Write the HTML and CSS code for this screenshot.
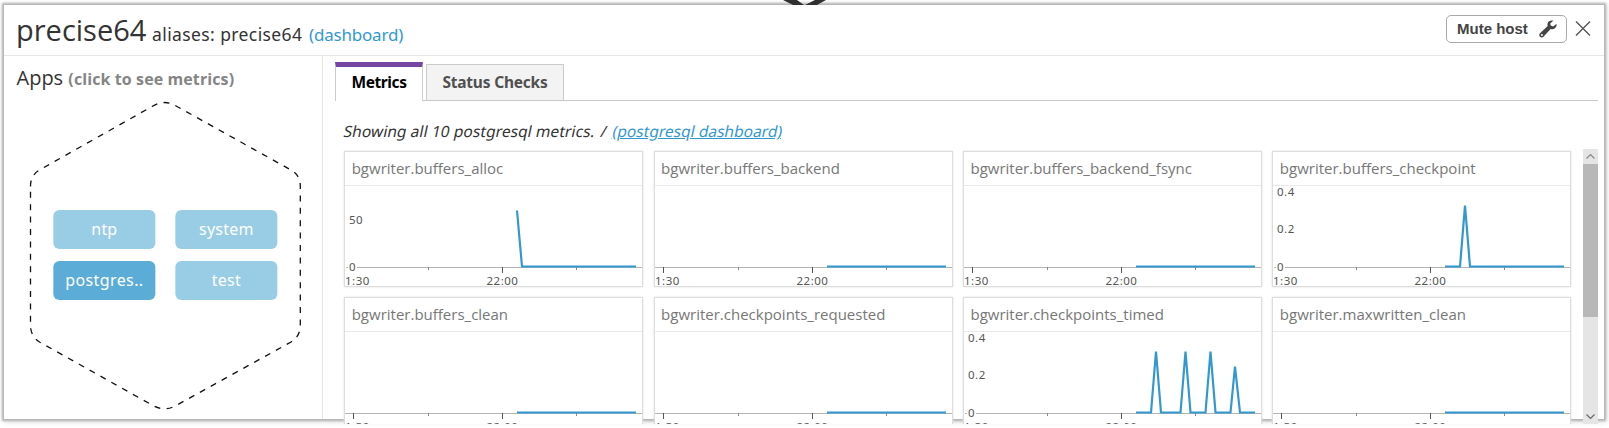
FILE: index.html
```
<!DOCTYPE html>
<html lang="en">
<head>
<meta charset="utf-8">
<title>precise64</title>
<link rel="stylesheet" href="styles.css">
</head>
<body>
<svg class="host-pointer" width="50" height="5" viewBox="0 0 50 5"><path d="M3 0h14l7 5h-11zM35 0h11l-9 5h-12z" fill="#303030"/></svg>
<main class="panel">
  <header class="header">
    <h1 class="host"><span class="host-name">precise64</span><span class="aliases">aliases: precise64</span><a class="link">(dashboard)</a></h1>
    <div class="actions">
      <button class="mute"><span>Mute host</span>
        <svg width="18" height="18" viewBox="0 0 18 18"><path d="M17.3 4.1 14.2 6.500 11.700 5.600 11.200 3.500 14.300.8C12 0 9.300 1 8.600 3.300c-.3 1-.2 1.900.1 2.800L1 13.200c-1 1-.9 2.500 0 3.500s2.600 1 3.500 0L11.600 9c2.900 1 5.900-1 6-3.700 0-.4-.1-.8-.3-1.200zM2.900 16a1 1 0 1 1 0-2 1 1 0 0 1 0 2z" fill="#444"/></svg>
      </button>
      <svg class="close" width="16" height="16" viewBox="0 0 16 16"><path d="M1 1.500l14 14M15 1.500L1 15.500" stroke="#555" stroke-width="1.4"/></svg>
    </div>
  </header>
  <div class="content">
    <aside class="sidebar">
      <h2 class="apps-title">Apps <span>(click to see metrics)</span></h2>
      <div class="hexagon">
        <svg class="outline" width="272" height="310" viewBox="0 0 272 310"><path d="M1.500 86.500Q1.500 75 10.500 70L123 6.500Q135.500-1.500 148 6.500L262 70Q271.300 75 271.300 86.500V225Q271.300 236.500 262 242L148 305Q135.500 312.500 123 305L10.500 242Q1.500 236.500 1.500 225Z" fill="none" stroke="#111" stroke-width="1.3" stroke-dasharray="6 6.400"/></svg>
        <div class="apps">
          <a class="app">ntp</a><a class="app">system</a>
          <a class="app selected">postgres..</a><a class="app">test</a>
        </div>
      </div>
    </aside>
    <section class="main">
      <nav class="tabs"><a class="tab active">Metrics</a><a class="tab">Status Checks</a></nav>
      <p class="summary"><span class="s-text">Showing all 10 postgresql metrics.</span><span class="slash">/</span><a class="s-link">(postgresql dashboard)</a></p>
      <div class="viewport">
        <div class="grid" id="grid"></div>
        <div class="scrollbar">
          <svg width="15" height="15" viewBox="0 0 15 15"><path d="M3.500 9.500l4-4 4 4" fill="none" stroke="#888" stroke-width="1.200"/></svg>
          <div class="thumb"></div>
          <svg width="15" height="15" viewBox="0 0 15 15"><path d="M3.500 5.500l4 4 4-4" fill="none" stroke="#666" stroke-width="1.200"/></svg>
        </div>
      </div>
    </section>
  </div>
</main>
<script src="charts.js"></script>
</body>
</html>
```
FILE: charts.js
```
const idle = '173,115 292,115';
const small = [['0.4', 7], ['0.2', 44], ['0', 82]];
const metrics = [
  ['bgwriter.buffers_alloc', '173,59 178,115 292,115', [['50', 35], ['0', 82]]],
  ['bgwriter.buffers_backend', idle, []],
  ['bgwriter.buffers_backend_fsync', idle, []],
  ['bgwriter.buffers_checkpoint', '173,115 188,115 193,54 198,115 292,115', small],
  ['bgwriter.buffers_clean', idle, []],
  ['bgwriter.checkpoints_requested', idle, []],
  ['bgwriter.checkpoints_timed', '173,115 188,115 193,54 198,115 217.500,115 222.500,54 227.500,115 242.500,115 247.500,54 252.500,115 267.500,115 272,69 277,115 292,115', small],
  ['bgwriter.maxwritten_clean', idle, []]
];
document.getElementById('grid').innerHTML = metrics.map(([name, points, labels]) => {
  const hasY = labels.length > 0;
  const y = labels.map(([label, pos]) =>
    `<text x="5" y="${pos + 4}">${label}</text>`).join('');
  const start = hasY ? 13 : 1;
  return `<article class="card"><h3 class="card-title">${name}</h3>
    <svg class="chart" width="297" height="101" viewBox="1 0 297 101">
      <path class="axis" d="M${start} 82.500H298${hasY ? 'M2 82.500h2' : ''}"/>
      <path class="tick" d="M158.500 82v6${hasY ? '' : 'M9.500 82v6'}"/>
      <path class="minor" d="M84.500 82v3M232.500 82v3"/>
      ${y}<text x="1" y="100">1:30</text><text x="158.500" y="100" text-anchor="middle">22:00</text>
      <polyline class="series" transform="translate(0 -33.500)" points="${points}"/>
    </svg></article>`;
}).join('');
```
FILE: styles.css
```
* { box-sizing: border-box; }
body { margin: 0; width: 1609px; height: 428px; overflow: hidden; background: #fff; font-family: "Noto Sans", "Open Sans", sans-serif; color: #333; }
h1, h2, h3, p { margin: 0; font-weight: 400; white-space: nowrap; }
.host-pointer { position: absolute; left: 780px; top: 0; z-index: 1; }
.panel { width: 1600px; height: 414px; margin: 5px 0 0 4px; background: #fff; box-shadow: 0 0 2px 2px #b5b5b5, 1px 1px 5px 2px #ddd; display: flex; flex-direction: column; }
.header { height: 51px; flex: none; border-bottom: 1px solid #e7e7e7; padding: 0 13px 0 12px; display: flex; justify-content: space-between; }
.host { display: flex; align-items: baseline; line-height: 50px; }
.host-name { font-family: "Open Sans", sans-serif; font-size: 29px; width: 136px; }
.aliases { font-size: 17.5px; letter-spacing: .4px; width: 157px; }
.link { font-size: 17px; letter-spacing: -.2px; color: #3398cf; }
.actions { display: flex; align-items: center; gap: 8px; padding-bottom: 4px; }
.mute { width: 121px; height: 28px; margin-top: 1px; border: 1px solid #aaa; border-radius: 5px; background: #fff; padding: 0 9px 0 10px; font: bold 15px "Liberation Sans", Arial, sans-serif; color: #444; display: flex; align-items: center; justify-content: space-between; white-space: nowrap; }
.content { display: flex; flex: 1; min-height: 0; }
.sidebar { width: 319px; border-right: 1px solid #e4e4e4; flex: none; }
.apps-title { font-family: "Open Sans", sans-serif; font-size: 20px; line-height: 28px; padding: 8px 0 0 12.5px; height: 44px; }
.apps-title span { font-size: 16px; letter-spacing: .1px; font-weight: 700; color: #858585; }
.hexagon { width: 272px; height: 310px; margin-left: 25px; display: grid; place-items: center; }
.outline, .apps { grid-area: 1 / 1; }
.apps { display: grid; grid-template-columns: 102px 102px; gap: 12px 20px; transform: translateX(.35px); }
.app { height: 39px; border-radius: 6px; background: #99cce5; color: #fff; font-size: 16px; letter-spacing: .2px; line-height: 38px; text-align: center; }
.selected { background: #5bacd6; letter-spacing: .4px; }
.main { flex: 1; min-width: 0; padding: 6px 6px 0 12px; }
.tabs { height: 39px; display: flex; align-items: flex-start; gap: 3px; border-bottom: 1px solid #c8c8c8; }
.tab { width: 138px; height: 36px; margin-top: 2px; border: 1px solid #ccc; border-bottom: 0; background: #f3f3f3; color: #505050; font-size: 15.5px; letter-spacing: -.2px; font-weight: 700; line-height: 34px; text-align: center; }
.active { width: 88px; height: 39px; margin-top: 0; border-top: 5px solid #7647a2; background: #fff; color: #000; letter-spacing: -.4px; line-height: 30px; }
.summary { display: flex; align-items: baseline; height: 48px; padding: 19px 0 0 9px; font-size: 15.5px; line-height: 22px; }
.summary > * { transform: skewX(-12deg); }
.s-text { width: 257px; letter-spacing: .08px; }
.slash { width: 12px; }
.s-link { color: #3398cf; text-decoration: underline; letter-spacing: .02px; }
.viewport { height: 275px; overflow: hidden; display: flex; justify-content: space-between; padding-left: 9.2px; }
.grid { display: grid; grid-template-columns: repeat(4, 299px); grid-auto-rows: 136px; gap: 10px 10.400px; padding-top: 2px; }
.card { border: 1px solid #ddd; box-shadow: 0 0 2px #ddd; background: #fff; overflow: hidden; }
.card-title { height: 34px; border-bottom: 1px solid #e9e9e9; padding-left: 6.5px; font-family: "Open Sans", sans-serif; font-size: 15px; line-height: 32px; color: #777; }
.chart { display: block; margin-top: -1px; font-size: 11.5px; letter-spacing: .5px; fill: #555; }
.axis { fill: none; stroke: #b5b5b5; }
.tick { stroke: #555; }
.minor { stroke: #888; }
.series { fill: none; stroke: #3398cf; stroke-width: 2.2; }
.scrollbar { width: 15px; background: #e5e5e5; display: flex; flex-direction: column; }
.scrollbar svg { flex: none; display: block; }
.thumb { height: 153px; background: #b8b8b8; margin-bottom: auto; flex: none; }
```
